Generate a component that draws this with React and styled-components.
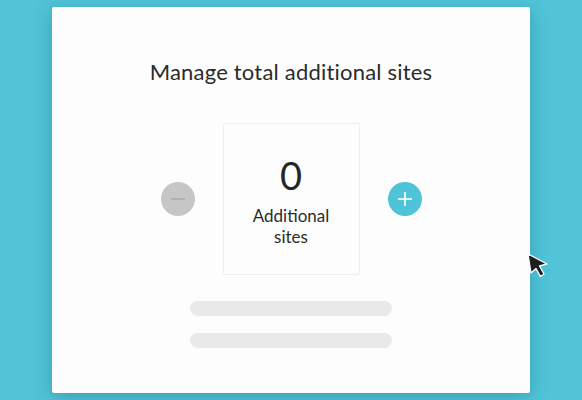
import React from "react";
import styled, { createGlobalStyle } from "styled-components";

const Global = createGlobalStyle`
  html, body { margin: 0; padding: 0; background: #51c4d8; }
  body { font-family: "Lato", "Open Sans", sans-serif; }
`;

const Page = styled.div`
  position: relative;
  width: 582px;
  height: 400px;
  overflow: hidden;
  background: #51c4d8;
  padding: 7px 0 0 52px;
  box-sizing: border-box;
`;

const Card = styled.div`
  width: 478px;
  height: 386px;
  background: #fdfdfd;
  border-radius: 2px;
  box-shadow: 0 4px 18px rgba(20, 90, 110, 0.35);
  display: flex;
  flex-direction: column;
  align-items: center;
  box-sizing: border-box;
  padding-top: 52px;
`;

const Title = styled.h1`
  margin: 0;
  font-size: 22px;
  line-height: 26px;
  font-weight: 400;
  color: #2b2b2b;
  letter-spacing: 0.2px;
`;

const CounterRow = styled.div`
  display: flex;
  align-items: center;
  gap: 28px;
  margin-top: 38px;
`;

const RoundButton = styled.button`
  width: 34px;
  height: 34px;
  border-radius: 50%;
  border: none;
  padding: 0;
  background: ${(p) => (p.$active ? "#4fc3d7" : "#c6c6c6")};
  display: flex;
  align-items: center;
  justify-content: center;
  cursor: pointer;
`;

const CountBox = styled.div`
  width: 137px;
  height: 152px;
  box-sizing: border-box;
  border: 1px solid #efefef;
  border-radius: 2px;
  display: flex;
  flex-direction: column;
  align-items: center;
  padding-top: 28px;
`;

const Count = styled.div`
  font-size: 38px;
  line-height: 46px;
  color: #262626;
`;

const CountLabel = styled.div`
  margin-top: 7px;
  font-size: 17px;
  line-height: 21px;
  color: #2b2b2b;
  text-align: center;
  width: 100px;
`;

const Bars = styled.div`
  display: flex;
  flex-direction: column;
  gap: 17px;
  margin-top: 26px;
`;

const Bar = styled.div`
  width: 202px;
  height: 15px;
  border-radius: 8px;
  background: #e9e9e9;
`;

const Cursor = styled.svg`
  position: absolute;
  left: 525px;
  top: 251px;
`;

export default function App() {
  return (
    <>
      <Global />
      <Page>
        <Card>
          <Title>Manage total additional sites</Title>
          <CounterRow>
            <RoundButton aria-label="decrease">
              <svg width="18" height="18" viewBox="0 0 18 18">
                <line x1="2" y1="9" x2="16" y2="9" stroke="#ababab" strokeWidth="1.6" />
              </svg>
            </RoundButton>
            <CountBox>
              <Count>0</Count>
              <CountLabel>Additional sites</CountLabel>
            </CountBox>
            <RoundButton $active aria-label="increase">
              <svg width="18" height="18" viewBox="0 0 18 18">
                <line x1="2" y1="9" x2="16" y2="9" stroke="#ffffff" strokeWidth="1.6" />
                <line x1="9" y1="2" x2="9" y2="16" stroke="#ffffff" strokeWidth="1.6" />
              </svg>
            </RoundButton>
          </CounterRow>
          <Bars>
            <Bar />
            <Bar />
          </Bars>
        </Card>
        <Cursor width="26" height="32" viewBox="0 0 26 32">
          <path
            d="M3 3 L22 13 L14.5 15 L19 23 L15.5 25.5 L11 17.5 L6 22 Z"
            fill="#1e1e1e"
            stroke="#ffffff"
            strokeWidth="1.3"
            strokeLinejoin="round"
          />
        </Cursor>
      </Page>
    </>
  );
}
